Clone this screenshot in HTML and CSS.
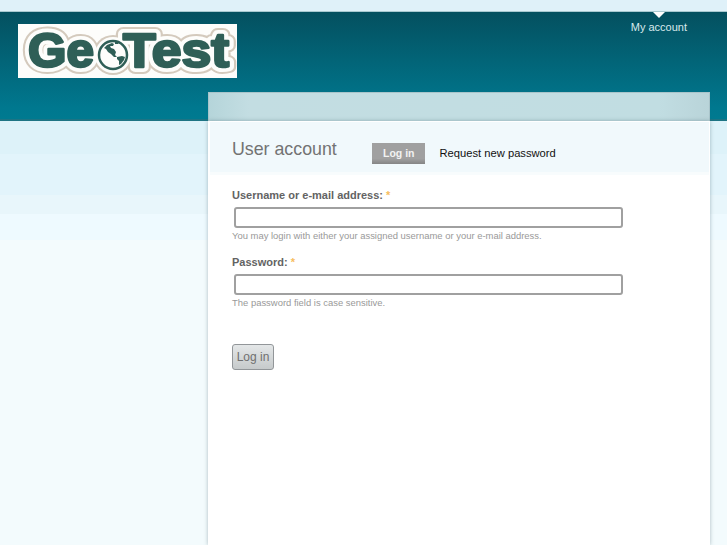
FILE: index.html
```html
<!DOCTYPE html>
<html lang="en">
<head>
<meta charset="utf-8">
<title>User account | GeoTest</title>
<link rel="stylesheet" href="styles.css">
</head>
<body>
<div class="strip"></div>
<header class="site-header">
  <a class="logo" href="#">
    <svg class="logo-svg" width="219" height="54" viewBox="0 0 219 54">
      <rect width="219" height="54" fill="#fdfdfb"/>
      <g class="logo-art">
        <text class="logo-line" x="10" y="43" textLength="66" lengthAdjust="spacingAndGlyphs">Ge</text>
        <text class="logo-line" x="105" y="43" textLength="106" lengthAdjust="spacingAndGlyphs">Test</text>
        <circle cx="95" cy="31" r="20" fill="#d4cabd"/>
        <text class="logo-halo" x="10" y="43" textLength="66" lengthAdjust="spacingAndGlyphs">Ge</text>
        <text class="logo-halo" x="105" y="43" textLength="106" lengthAdjust="spacingAndGlyphs">Test</text>
        <circle cx="95" cy="31" r="18" fill="#fdfdfb"/>
        <text class="logo-text" x="10" y="43" textLength="66" lengthAdjust="spacingAndGlyphs">Ge</text>
        <text class="logo-text" x="105" y="43" textLength="106" lengthAdjust="spacingAndGlyphs">Test</text>
        <circle cx="95" cy="31" r="14" fill="#fdfdfb" stroke="#2f5f57" stroke-width="2.5"/>
        <path d="M86 24l3-3 5-2 2 1-1 2-3 0 1 2 3 1 2 3-1 3 2 2-3 0-3-3-3-2-2-3zM97 18l4 0-1 2-3 0zM99 33l5-1 3 1-1 3-3 4-2 1 0-4-2-2z" fill="#2f5f57"/>
      </g>
    </svg>
  </a>
  <nav class="account-nav"><a href="#">My account</a></nav>
</header>
<main class="panel">
  <div class="panel-tab"></div>
  <div class="panel-body">
    <div class="title-row">
      <h1>User account</h1>
      <ul class="tabs">
        <li><a class="tab active" href="#">Log in</a></li>
        <li><a class="tab" href="#">Request new password</a></li>
      </ul>
    </div>
    <form class="login">
      <div class="field">
        <label for="u">Username or e-mail address: <span class="req">*</span></label>
        <input id="u" type="text">
        <p class="desc">You may login with either your assigned username or your e-mail address.</p>
      </div>
      <div class="field">
        <label for="p">Password: <span class="req">*</span></label>
        <input id="p" type="password">
        <p class="desc">The password field is case sensitive.</p>
      </div>
      <button type="button" class="submit">Log in</button>
    </form>
  </div>
</main>
</body>
</html>
```
FILE: styles.css
```css
html, body { margin: 0; padding: 0; height: 100%; overflow: hidden; }
body {
  font-family: "Liberation Sans", Arial, sans-serif;
  background: #f3fbfd linear-gradient(#ddf2f9 154px, #e2f4fb 154px, #e2f4fb 195px, #e8f6fb 195px, #e8f6fb 214px, #eefaff 214px, #eefaff 240px, #f3fbfd 240px) no-repeat;
  display: flex;
  flex-direction: column;
}
.strip { height: 12px; background: #dff1f9; border-bottom: 1px solid #a9c9d0; box-sizing: border-box; flex: none; }
.site-header {
  height: 109px;
  flex: none;
  box-sizing: border-box;
  padding-left: 18px;
  background: linear-gradient(#04505f, #00788f 90%, #007a90);
  border-bottom: 2px solid #1d7484;
  display: flex;
  justify-content: space-between;
  align-items: flex-start;
}
.logo { display: block; height: 54px; margin-top: 12px; }
.logo-svg { display: block; }
.logo-art { filter: blur(.4px); }
.logo-text, .logo-halo, .logo-line {
  font-family: "Liberation Sans", Arial, sans-serif;
  font-weight: 700;
  font-size: 48px;
  stroke-linejoin: round;
}
.logo-text { fill: #2f5f57; stroke: #2f5f57; stroke-width: 2.5px; }
.logo-halo { fill: #fdfdfb; stroke: #fdfdfb; stroke-width: 10px; }
.logo-line { fill: #d4cabd; stroke: #d4cabd; stroke-width: 14px; }
.account-nav { position: relative; margin-right: 40px; font-size: 11px; padding-top: 9px; }
.account-nav a { color: #d8e9ec; text-decoration: none; }
.account-nav::before {
  content: "";
  position: absolute;
  top: 0; left: 22px;
  border: 6px solid transparent;
  border-top-color: #fff;
  border-bottom: 0;
}
.panel {
  flex: 1;
  width: 502px;
  margin: -29px 0 0 208px;
  display: flex;
  flex-direction: column;
  position: relative;
}
.panel-tab {
  height: 29px;
  flex: none;
  background: linear-gradient(90deg, #b5d5da, #c3dde2 8%, #c1dde2 90%, #b9d4d9);
  border: 1px solid #a9c4ca;
  border-bottom: 0;
  box-sizing: border-box;
}
.panel-body { flex: 1; background: #fff; box-shadow: 0 0 4px rgba(60, 90, 100, .4); }
.title-row {
  height: 54px;
  box-sizing: border-box;
  margin: 0 1px 0 2px;
  background: #f1f9fc;
  border-top: 1px solid #fff;
  border-bottom: 3px solid #f8fcfd;
  padding-left: 22px;
  display: flex;
  align-items: flex-start;
}
h1 { margin: 17px 0 0; font-size: 17.8px; font-weight: 400; color: #737373; width: 140px; flex: none; }
.tabs { list-style: none; display: flex; margin: 21px 0 0; padding: 0; font-size: 11.2px; }
.tab { display: block; padding: 0 15px; line-height: 21px; color: #111; text-decoration: none; }
.tab.active {
  padding: 0 10px 0 11px;
  font-size: 10.5px;
  font-weight: 700;
  color: #f2f2f2;
  background: linear-gradient(#a0a0a0 75%, #858585);
}
.login { padding: 13px 24px 0; }
.field { margin-bottom: 13px; }
label { display: block; font-size: 11px; font-weight: 700; color: #636363; line-height: 14px; }
.req { color: #f7bd5e; }
input {
  display: block;
  box-sizing: border-box;
  width: 389px;
  height: 21px;
  margin: 5px 0 0 2px;
  padding: 1px 4px;
  background: #fff;
  border: 2px solid #a0a0a0;
  border-radius: 3px;
}
.desc { margin: 2px 0 0; font-size: 9.45px; line-height: 12px; color: #999; }
.submit {
  display: block;
  margin-top: 35px;
  width: 42px;
  height: 26px;
  padding: 0;
  font: 12px "Liberation Sans", Arial, sans-serif;
  color: #707070;
  background: linear-gradient(#e4e7e8, #c6cacb);
  border: 1px solid #929699;
  border-radius: 3px;
}
```
